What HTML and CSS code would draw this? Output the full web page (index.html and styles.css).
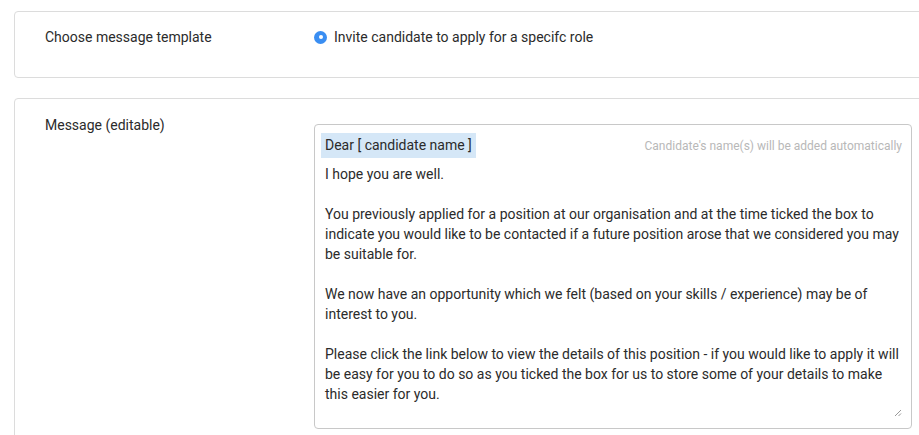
FILE: index.html
```html
<!DOCTYPE html>
<html>
<head>
<meta charset="utf-8">
<link rel="stylesheet" href="styles.css">
</head>
<body>
<div class="page">
  <section class="card card-template">
    <div class="row">
      <div class="label">Choose message template</div>
      <div class="field">
        <label class="radio">
          <span class="radio-dot"></span>
          <span>Invite candidate to apply for a specifc role</span>
        </label>
      </div>
    </div>
  </section>

  <section class="card card-message">
    <div class="row">
      <div class="label label-msg">Message (editable)</div>
      <div class="field field-msg">
        <div class="editor">
          <div class="editor-head">
            <span class="salutation">Dear [ candidate name ]</span>
            <span class="hint">Candidate's name(s) will be added automatically</span>
          </div>
          <div class="editor-body">
            <p>I hope you are well.</p>
            <p>You previously applied for a position at our organisation and at the time ticked the box to indicate you would like to be contacted if a future position arose that we considered you may be suitable for.</p>
            <p>We now have an opportunity which we felt (based on your skills / experience) may be of interest to you.</p>
            <p>Please click the link below to view the details of this position - if you would like to apply it will be easy for you to do so as you ticked the box for us to store some of your details to make this easier for you.</p>
          </div>
          <svg class="resize" width="8" height="8" viewBox="0 0 8 8"><path d="M7 1L1 7M7 4.5L4.5 7" stroke="#999" stroke-width="1" fill="none"/></svg>
        </div>
      </div>
    </div>
  </section>
</div>
</body>
</html>
```

FILE: styles.css
```css
html, body {
  margin: 0;
  padding: 0;
  background: #fff;
}
body {
  font-family: Roboto, "Liberation Sans", Arial, sans-serif;
  font-size: 14px;
  color: #333;
  overflow: hidden;
}
.page {
  padding: 11px 0 0 14px;
  width: 940px;
  height: 424px;
  overflow: hidden;
}
.card {
  border: 1px solid #dcdcdc;
  border-radius: 4px;
  background: #fff;
}
.card-template {
  height: 65px;
  margin-bottom: 20px;
}
.card-message {
  height: 360px;
}
.row {
  display: flex;
  padding-left: 30px;
}
.label {
  width: 269px;
  line-height: 20px;
  padding-top: 15px;
  color: #2b2b2b;
}
.label-msg {
  padding-top: 16px;
}
.field {
  padding-top: 15px;
  line-height: 20px;
}
.radio {
  display: flex;
  align-items: center;
  gap: 7px;
  color: #2b2b2b;
}
.radio-dot {
  width: 13px;
  height: 13px;
  border-radius: 50%;
  background: #3a8ef2;
  position: relative;
  flex: none;
}
.radio-dot::after {
  content: "";
  position: absolute;
  left: 4.5px;
  top: 4.5px;
  width: 4px;
  height: 4px;
  border-radius: 50%;
  background: #fff;
}
.field-msg {
  padding-top: 25px;
}
.editor {
  position: relative;
  width: 596px;
  height: 303px;
  border: 1px solid #c8c8c8;
  border-radius: 4px;
  box-sizing: content-box;
  padding: 0;
}
.editor-head {
  display: flex;
  justify-content: space-between;
  align-items: center;
  padding: 8px 9px 0 6px;
}
.salutation {
  background: #d5e7f7;
  padding: 0 4px;
  line-height: 25px;
  color: #2b2b2b;
}
.hint {
  font-size: 12px;
  color: #b8b8b8;
}
.editor-body {
  padding: 6px 10px 0 10px;
  line-height: 20px;
  color: #2b2b2b;
}
.editor-body p {
  margin: 0 0 20px 0;
}
.resize {
  position: absolute;
  right: 9px;
  bottom: 11px;
}
```
